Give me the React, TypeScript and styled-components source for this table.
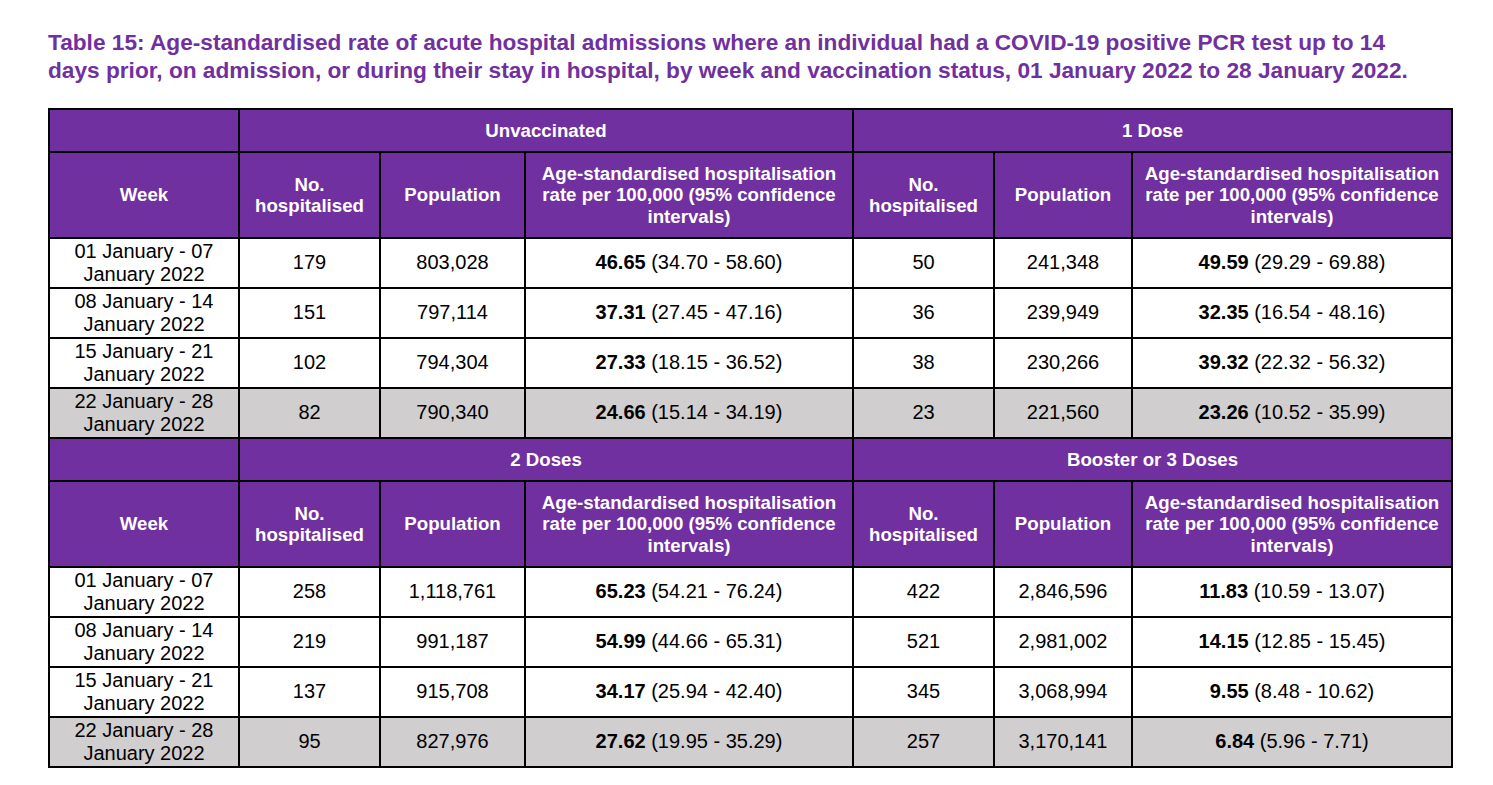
import React from "react";
import styled, { createGlobalStyle } from "styled-components";

const GlobalStyle = createGlobalStyle`
  html, body { margin: 0; padding: 0; background: #ffffff; }
  body { font-family: "Liberation Sans", Arial, sans-serif; color: #000; }
`;

const Page = styled.main`
  padding: 28px 0 0 48px;
`;

const Title = styled.h1`
  margin: 0 0 24px 0;
  font-size: 22.67px;
  line-height: 28px;
  font-weight: 700;
  color: #7030a0;
  white-space: nowrap;
`;

const Grid = styled.div`
  display: grid;
  grid-template-columns: 190px 141px 145px 328px 141px 138px 320px;
  width: max-content;
  border-left: 2px solid #000;
  border-top: 2px solid #000;
`;

type Variant = "group" | "head" | "data";

const Cell = styled.div<{ $span?: number; $variant: Variant; $shade?: boolean }>`
  box-sizing: border-box;
  grid-column: span ${(p) => p.$span ?? 1};
  border-right: 2px solid #000;
  border-bottom: 2px solid #000;
  display: flex;
  align-items: center;
  justify-content: center;
  text-align: center;
  padding: 0 8px;
  height: ${(p) => (p.$variant === "group" ? 43 : p.$variant === "head" ? 86 : 50)}px;
  background: ${(p) => (p.$variant === "data" ? (p.$shade ? "#d0cece" : "#ffffff") : "#7030a0")};
  color: ${(p) => (p.$variant === "data" ? "#000" : "#fff")};
  font-weight: ${(p) => (p.$variant === "data" ? 400 : 700)};
  font-size: ${(p) => (p.$variant === "data" ? "20px" : "18.67px")};
  line-height: ${(p) => (p.$variant === "data" ? "23.5px" : "21.5px")};
`;

const Strong = styled.b`
  font-weight: 700;
`;

type Row = {
  week: string;
  a: [string, string, string, string];
  b: [string, string, string, string];
};

type Section = {
  left: string;
  right: string;
  rows: Row[];
};

const sections: Section[] = [
  {
    left: "Unvaccinated",
    right: "1 Dose",
    rows: [
      { week: "01 January - 07 January 2022", a: ["179", "803,028", "46.65", "(34.70 - 58.60)"], b: ["50", "241,348", "49.59", "(29.29 - 69.88)"] },
      { week: "08 January - 14 January 2022", a: ["151", "797,114", "37.31", "(27.45 - 47.16)"], b: ["36", "239,949", "32.35", "(16.54 - 48.16)"] },
      { week: "15 January - 21 January 2022", a: ["102", "794,304", "27.33", "(18.15 - 36.52)"], b: ["38", "230,266", "39.32", "(22.32 - 56.32)"] },
      { week: "22 January - 28 January 2022", a: ["82", "790,340", "24.66", "(15.14 - 34.19)"], b: ["23", "221,560", "23.26", "(10.52 - 35.99)"] },
    ],
  },
  {
    left: "2 Doses",
    right: "Booster or 3 Doses",
    rows: [
      { week: "01 January - 07 January 2022", a: ["258", "1,118,761", "65.23", "(54.21 - 76.24)"], b: ["422", "2,846,596", "11.83", "(10.59 - 13.07)"] },
      { week: "08 January - 14 January 2022", a: ["219", "991,187", "54.99", "(44.66 - 65.31)"], b: ["521", "2,981,002", "14.15", "(12.85 - 15.45)"] },
      { week: "15 January - 21 January 2022", a: ["137", "915,708", "34.17", "(25.94 - 42.40)"], b: ["345", "3,068,994", "9.55", "(8.48 - 10.62)"] },
      { week: "22 January - 28 January 2022", a: ["95", "827,976", "27.62", "(19.95 - 35.29)"], b: ["257", "3,170,141", "6.84", "(5.96 - 7.71)"] },
    ],
  },
];

const RATE = "Age-standardised hospitalisation rate per 100,000 (95% confidence intervals)";

const StatusHeads = () => (
  <>
    <Cell $variant="head">No. hospitalised</Cell>
    <Cell $variant="head">Population</Cell>
    <Cell $variant="head">{RATE}</Cell>
  </>
);

const StatusData = ({ v, shade }: { v: [string, string, string, string]; shade: boolean }) => (
  <>
    <Cell $variant="data" $shade={shade}>{v[0]}</Cell>
    <Cell $variant="data" $shade={shade}>{v[1]}</Cell>
    <Cell $variant="data" $shade={shade}>
      <span>
        <Strong>{v[2]}</Strong> {v[3]}
      </span>
    </Cell>
  </>
);

export default function App() {
  return (
    <Page>
      <GlobalStyle />
      <Title>
        Table 15: Age-standardised rate of acute hospital admissions where an individual had a COVID-19 positive PCR test up to 14
        <br />
        days prior, on admission, or during their stay in hospital, by week and vaccination status, 01 January 2022 to 28 January 2022.
      </Title>
      <Grid>
        {sections.map((s) => (
          <React.Fragment key={s.left}>
            <Cell $variant="group" />
            <Cell $variant="group" $span={3}>{s.left}</Cell>
            <Cell $variant="group" $span={3}>{s.right}</Cell>
            <Cell $variant="head">Week</Cell>
            <StatusHeads />
            <StatusHeads />
            {s.rows.map((r, i) => {
              const shade = i === s.rows.length - 1;
              return (
                <React.Fragment key={r.week}>
                  <Cell $variant="data" $shade={shade}>{r.week}</Cell>
                  <StatusData v={r.a} shade={shade} />
                  <StatusData v={r.b} shade={shade} />
                </React.Fragment>
              );
            })}
          </React.Fragment>
        ))}
      </Grid>
    </Page>
  );
}
